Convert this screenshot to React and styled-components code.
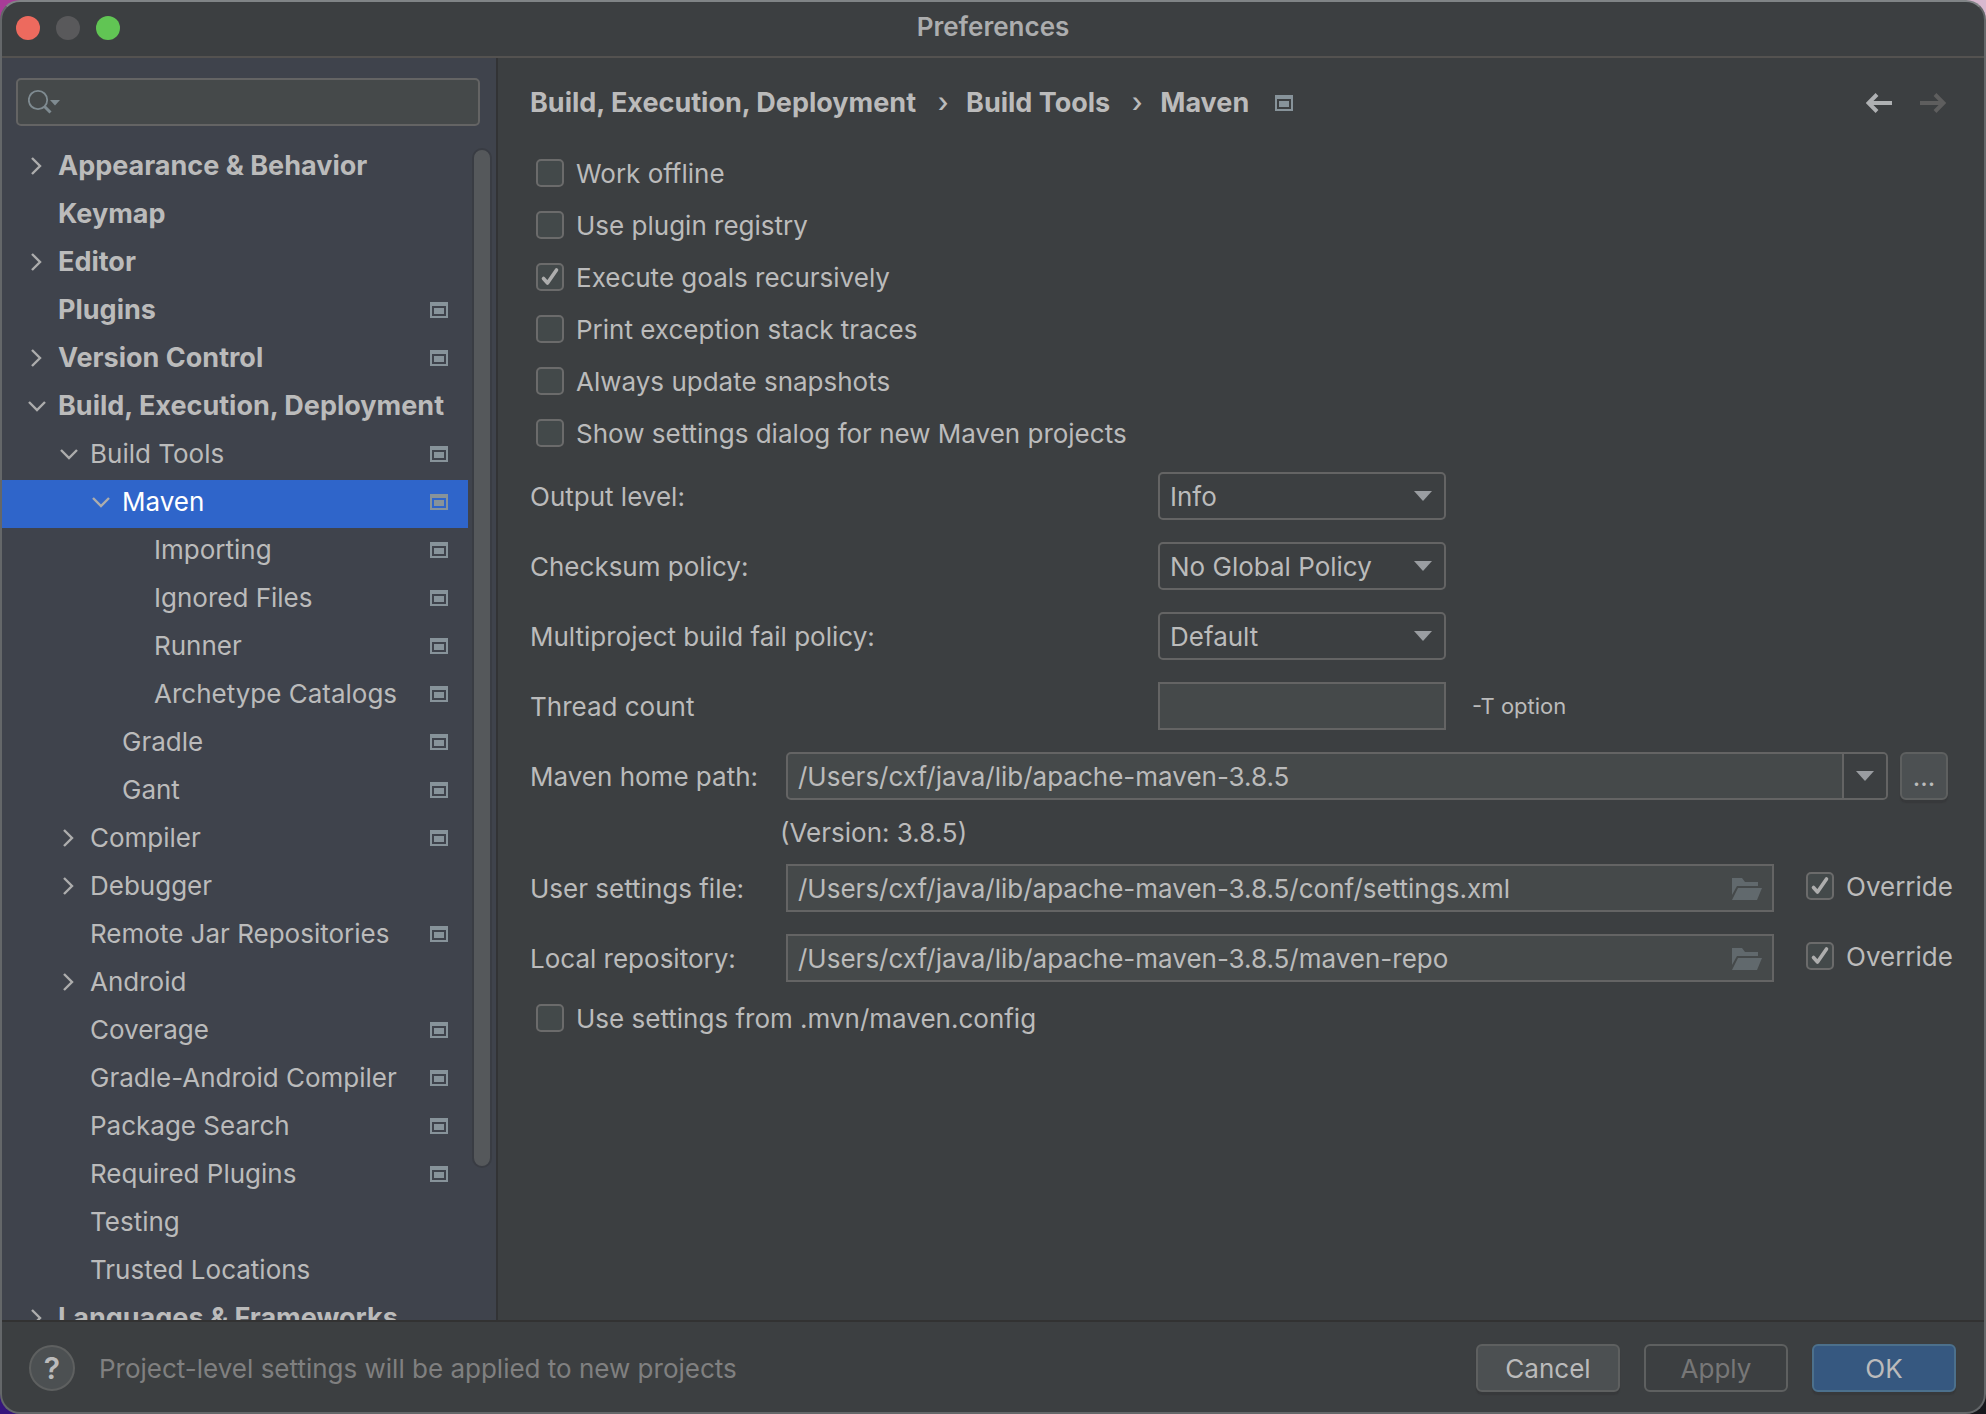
import React from "react";
import styled, { createGlobalStyle } from "styled-components";

const GlobalStyle = createGlobalStyle`
  * {
    box-sizing: border-box;
  }

  body {
    margin: 0;
    background: linear-gradient(to right, #a83c97 0, #a83c97 50%, #d8b8cf 50%) top / 100% 50% no-repeat,
      linear-gradient(to right, #35157c 0, #35157c 50%, #17171c 50%) bottom / 100% 50% no-repeat;
  }

  body, button, input, select {
    font-family: Inter, "Liberation Sans", sans-serif;
    font-size: 26px;
    line-height: 32px;
    color: #bbbbbb;
  }
`;

const tree = [
  { label: "Appearance & Behavior", level: 0, arrow: "right" },
  { label: "Keymap", level: 0 },
  { label: "Editor", level: 0, arrow: "right" },
  { label: "Plugins", level: 0, project: true },
  { label: "Version Control", level: 0, arrow: "right", project: true },
  { label: "Build, Execution, Deployment", level: 0, arrow: "down" },
  { label: "Build Tools", level: 1, arrow: "down", project: true },
  { label: "Maven", level: 2, arrow: "down", project: true, selected: true },
  { label: "Importing", level: 3, project: true },
  { label: "Ignored Files", level: 3, project: true },
  { label: "Runner", level: 3, project: true },
  { label: "Archetype Catalogs", level: 3, project: true },
  { label: "Gradle", level: 2, project: true },
  { label: "Gant", level: 2, project: true },
  { label: "Compiler", level: 1, arrow: "right", project: true },
  { label: "Debugger", level: 1, arrow: "right" },
  { label: "Remote Jar Repositories", level: 1, project: true },
  { label: "Android", level: 1, arrow: "right" },
  { label: "Coverage", level: 1, project: true },
  { label: "Gradle-Android Compiler", level: 1, project: true },
  { label: "Package Search", level: 1, project: true },
  { label: "Required Plugins", level: 1, project: true },
  { label: "Testing", level: 1 },
  { label: "Trusted Locations", level: 1 },
  { label: "Languages & Frameworks", level: 0, arrow: "right" },
];

const options = [
  { label: "Work offline" },
  { label: "Use plugin registry" },
  { label: "Execute goals recursively", checked: true },
  { label: "Print exception stack traces" },
  { label: "Always update snapshots" },
  { label: "Show settings dialog for new Maven projects" },
];

const selects = [
  { id: "output", label: "Output level:", values: ["Info", "Debug", "Warn", "Error", "Fatal", "Disabled"] },
  { id: "checksum", label: "Checksum policy:", values: ["No Global Policy", "Fail", "Warn"] },
  { id: "multiproject", label: "Multiproject build fail policy:", values: ["Default", "Fail Fast", "Fail at End", "Never Fail"] },
];

const paths = [
  { id: "settings", label: "User settings file:", value: "/Users/cxf/java/lib/apache-maven-3.8.5/conf/settings.xml" },
  { id: "repository", label: "Local repository:", value: "/Users/cxf/java/lib/apache-maven-3.8.5/maven-repo" },
];

const ProjectIcon = () => (
  <svg width="18" height="16" viewBox="0 0 18 16" fill="#87939a" aria-hidden="true">
    <path fillRule="evenodd" d="M0 0h18v16H0zM2 4v10h14V4z" />
    <path d="M4 6h10v6H4z" />
  </svg>
);

const Chevron = ({ dir }) => (
  <svg width="18" height="18" viewBox="0 0 18 18" fill="none" stroke="#adadad" strokeWidth="2.4" aria-hidden="true">
    <path d={dir === "down" ? "M1 5l8 8 8-8" : "M4 1l8 8-8 8"} />
  </svg>
);

const Triangle = () => (
  <svg width="18" height="10" viewBox="0 0 18 10" fill="#9a9da1" aria-hidden="true">
    <path d="M0 0h18L9 10z" />
  </svg>
);

const SearchIcon = () => (
  <svg width="34" height="26" viewBox="0 0 34 26" fill="none" stroke="#7f8b91" aria-hidden="true">
    <circle cx="10" cy="11" r="9.2" strokeWidth="1.8" />
    <path d="M16.500 17.500l6 6" strokeWidth="3" />
    <path d="M22 11h10l-5 5.500z" fill="#7f8b91" stroke="none" />
  </svg>
);

const FolderIcon = () => (
  <svg width="30" height="22" viewBox="0 0 30 22" fill="#61696d" aria-hidden="true">
    <path d="M0 0h10l3 4h13v4H5L0 17z" />
    <path d="M6 10h24l-5 12H0z" />
  </svg>
);

const Arrow = ({ back }) => (
  <svg width="26" height="20" viewBox="0 0 26 20" fill="none" stroke={back ? "#afb1b3" : "#5e5e5e"} strokeWidth="4" aria-hidden="true">
    <path d={back ? "M26 10H4M11 1.500L2.500 10l8.500 8.500" : "M0 10h22M15 1.500L23.500 10 15 18.500"} />
  </svg>
);

const Check = ({ label, checked }) => (
  <CheckLabel>
    <CheckBox>
      <input type="checkbox" defaultChecked={checked} />
      <svg width="28" height="28" viewBox="0 0 28 28" fill="none" stroke="#adadad" strokeWidth="3.600" strokeLinecap="round" strokeLinejoin="round" aria-hidden="true">
        <path d="M7.500 15.500l4 4.500 9-13" />
      </svg>
    </CheckBox>
    <CheckText>{label}</CheckText>
  </CheckLabel>
);

const App = () => {
  return (
    <Window>
      <GlobalStyle />
      <TitleBar>
        <Lights>
          <Light $color="#ed6a5e" aria-label="Close" />
          <Light $color="#59595b" aria-label="Minimize" />
          <Light $color="#61c554" aria-label="Zoom" />
        </Lights>
        <h1>Preferences</h1>
      </TitleBar>

      <Body>
        <Sidebar>
          <Search>
            <SearchIcon />
            <input type="text" aria-label="Search settings" />
          </Search>
          <TreeArea>
            <Tree>
              {tree.map((item) => (
                <li key={item.label}>
                  <TreeRow $level={item.level} $selected={item.selected}>
                    <ArrowSlot>{item.arrow && <Chevron dir={item.arrow} />}</ArrowSlot>
                    <span>{item.label}</span>
                    {item.project && <ProjectIcon />}
                  </TreeRow>
                </li>
              ))}
            </Tree>
            <ScrollTrack>
              <ScrollThumb />
            </ScrollTrack>
          </TreeArea>
        </Sidebar>

        <Main>
          <Header>
            <Breadcrumb aria-label="Breadcrumb">
              <a href="#build">Build, Execution, Deployment</a>
              <Separator>›</Separator>
              <a href="#tools">Build Tools</a>
              <Separator>›</Separator>
              <a href="#maven">Maven</a>
            </Breadcrumb>
            <ProjectIcon />
            <History>
              <button type="button" aria-label="Back"><Arrow back /></button>
              <button type="button" aria-label="Forward" disabled><Arrow /></button>
            </History>
          </Header>

          <Checks>
            {options.map((option) => (
              <Check key={option.label} {...option} />
            ))}
          </Checks>

          <Policies>
            {selects.map((select) => (
              <React.Fragment key={select.id}>
                <FieldLabel htmlFor={select.id}>{select.label}</FieldLabel>
                <SelectBox>
                  <select id={select.id}>
                    {select.values.map((value) => (
                      <option key={value}>{value}</option>
                    ))}
                  </select>
                  <Triangle />
                </SelectBox>
                <span />
              </React.Fragment>
            ))}
            <FieldLabel htmlFor="threads">Thread count</FieldLabel>
            <Field><input id="threads" type="text" /></Field>
            <Hint>-T option</Hint>
          </Policies>

          <PathRow>
            <FieldLabel htmlFor="home">Maven home path:</FieldLabel>
            <Field $round>
              <input id="home" type="text" defaultValue="/Users/cxf/java/lib/apache-maven-3.8.5" />
              <DropButton type="button" aria-label="Show paths"><Triangle /></DropButton>
            </Field>
            <BrowseButton type="button" aria-label="Browse">...</BrowseButton>
          </PathRow>
          <Version>(Version: 3.8.5)</Version>
          <Paths>
            {paths.map((path) => (
              <OverrideRow key={path.id}>
                <FieldLabel htmlFor={path.id}>{path.label}</FieldLabel>
                <Field>
                  <input id={path.id} type="text" defaultValue={path.value} />
                  <FolderButton type="button" aria-label="Choose file"><FolderIcon /></FolderButton>
                </Field>
                <Check label="Override" checked />
              </OverrideRow>
            ))}
            <Indent>
              <Check label="Use settings from .mvn/maven.config" />
            </Indent>
          </Paths>
        </Main>
      </Body>

      <Footer>
        <Help type="button" aria-label="Help">?</Help>
        <p>Project-level settings will be applied to new projects</p>
        <Button type="button">Cancel</Button>
        <Button type="button" disabled>Apply</Button>
        <Button type="button" $primary>OK</Button>
      </Footer>
    </Window>
  );
};

const Window = styled.div`
  display: flex;
  flex-direction: column;
  height: 100vh;
  overflow: hidden;
  background: #3c3f41;
  border: 2px solid #646769;
  border-top-color: #808486;
  border-radius: 20px;
`;

const TitleBar = styled.header`
  display: grid;
  grid-template-columns: 1fr auto 1fr;
  align-items: center;
  height: 56px;
  flex-shrink: 0;
  padding: 0 14px 2px;
  border-bottom: 2px solid #545250;

  h1 {
    margin: 0 0 2px;
    font-size: 26px;
    line-height: 32px;
    font-weight: 600;
    color: #acadae;
  }
`;

const Lights = styled.div`
  display: flex;
  gap: 16px;
`;

const Light = styled.button`
  width: 24px;
  height: 24px;
  padding: 0;
  border: none;
  border-radius: 50%;
  background: ${({ $color }) => $color};
`;

const Body = styled.div`
  display: flex;
  flex: 1;
  min-height: 0;
`;

const Sidebar = styled.aside`
  display: flex;
  flex-direction: column;
  width: 496px;
  flex-shrink: 0;
  padding-top: 20px;
  background: #3f434c;
  border-right: 2px solid #323335;
`;

const Search = styled.div`
  display: flex;
  align-items: center;
  height: 48px;
  flex-shrink: 0;
  margin: 0 16px 18px 14px;
  padding-left: 10px;
  background: #45494a;
  border: 2px solid #646464;
  border-radius: 5px;

  input {
    flex: 1;
    min-width: 0;
    border: none;
    outline: none;
    background: none;
  }
`;

const TreeArea = styled.div`
  display: flex;
  flex: 1;
  min-height: 0;
  gap: 4px;
`;

const Tree = styled.ul`
  flex: 1;
  min-width: 0;
  margin: 0;
  padding: 0;
  list-style: none;
  overflow: hidden;
`;

const TreeRow = styled.button`
  display: flex;
  align-items: center;
  width: 100%;
  height: 48px;
  border: none;
  padding: 0 20px 4px ${({ $level }) => 26 + $level * 32}px;
  text-align: left;
  white-space: nowrap;
  font-size: ${({ $level }) => ($level === 0 ? 27 : 26)}px;
  font-weight: ${({ $level }) => ($level === 0 ? 700 : 400)};
  color: ${({ $selected }) => ($selected ? "#ffffff" : "#bbbbbb")};
  background: ${({ $selected }) => ($selected ? "#2f65ca" : "none")};

  span {
    flex: 1;
  }
`;

const ArrowSlot = styled.i`
  display: flex;
  width: 30px;
`;

const ScrollTrack = styled.div`
  width: 20px;
  margin-right: 4px;
  padding-top: 4px;
`;

const ScrollThumb = styled.div`
  height: 87%;
  background: #55585b;
  border: 2px solid #393c43;
  border-radius: 10px;
`;

const Main = styled.main`
  flex: 1;
  min-width: 0;
  padding: 0 30px 0 32px;
`;

const Header = styled.div`
  display: flex;
  align-items: center;
  height: 90px;
`;

const Breadcrumb = styled.nav`
  display: flex;
  align-items: center;
  margin-right: 26px;
  font-size: 27px;
  font-weight: 700;

  a {
    color: inherit;
    text-decoration: none;
  }
`;

const Separator = styled.span`
  width: 50px;
  padding-left: 4px;
  text-align: center;
  font-weight: 500;
`;

const History = styled.div`
  display: flex;
  gap: 28px;
  margin-left: auto;
  margin-right: 8px;

  button {
    display: flex;
    padding: 0;
    border: none;
    background: none;
  }
`;

const Checks = styled.div`
  display: flex;
  flex-direction: column;
  align-items: flex-start;
  gap: 24px;
  padding: 11px 6px 25px;
`;

const CheckLabel = styled.label`
  display: flex;
  align-items: center;
  gap: 12px;
  height: 28px;
  white-space: nowrap;
`;

const CheckText = styled.span`
  padding-top: 2px;
`;

const CheckBox = styled.span`
  display: grid;

  input, svg {
    grid-area: 1 / 1;
  }

  input {
    appearance: none;
    width: 28px;
    height: 28px;
    margin: 0;
    background: #43494a;
    border: 2px solid #6b6b6b;
    border-radius: 5px;
  }

  svg {
    visibility: hidden;
    pointer-events: none;
  }

  input:checked + svg {
    visibility: visible;
  }
`;

const Policies = styled.div`
  display: grid;
  grid-template-columns: 628px 288px 1fr;
  grid-auto-rows: 48px;
  align-items: center;
  row-gap: 22px;
  margin-bottom: 22px;
`;

const FieldLabel = styled.label`
  width: 256px;
  padding-top: 2px;
  white-space: nowrap;
`;

const SelectBox = styled.div`
  display: grid;
  align-items: center;

  select, svg {
    grid-area: 1 / 1;
  }

  select {
    appearance: none;
    width: 100%;
    height: 48px;
    padding: 2px 40px 0 10px;
    background: #3c3f41;
    border: 2px solid #646464;
    border-radius: 5px;
  }

  svg {
    justify-self: end;
    margin-right: 14px;
    pointer-events: none;
  }
`;

const Field = styled.div`
  display: flex;
  flex: 1;
  min-width: 0;
  height: 48px;
  background: #45494a;
  border: 2px solid #646464;
  border-radius: ${({ $round }) => ($round ? "5px" : "0")};

  input {
    flex: 1;
    min-width: 0;
    padding: 2px 10px 0;
    border: none;
    outline: none;
    background: none;
  }
`;

const Hint = styled.span`
  padding-left: 26px;
  font-size: 22px;
`;

const PathRow = styled.div`
  display: flex;
  align-items: center;
  padding-right: 6px;
`;

const DropButton = styled.button`
  display: flex;
  align-items: center;
  justify-content: center;
  width: 44px;
  padding: 0;
  border: none;
  border-left: 2px solid #646464;
  border-radius: 0 3px 3px 0;
  background: #3c3f41;
`;

const FolderButton = styled.button`
  display: flex;
  align-items: center;
  padding: 2px 10px 0;
  border: none;
  background: none;
`;

const Button = styled.button`
  width: 144px;
  height: 48px;
  padding: 2px 0 0;
  background: ${({ $primary }) => ($primary ? "#365880" : "#4c5052")};
  border: 2px solid ${({ $primary }) => ($primary ? "#4c708c" : "#5e6060")};
  border-radius: 6px;
  box-shadow: 0 3px 1px #37393b;

  &:disabled {
    color: #777777;
    background: none;
    box-shadow: none;
  }
`;

const BrowseButton = styled(Button)`
  width: 48px;
  margin-left: 12px;
`;

const Version = styled.p`
  margin: 0;
  padding: 17px 0 15px 250px;
`;

const Paths = styled.div`
  display: flex;
  flex-direction: column;
  gap: 22px;
`;

const OverrideRow = styled.div`
  display: grid;
  grid-template-columns: 256px 1fr 180px;
  align-items: center;

  ${CheckLabel} {
    margin-left: 32px;
    margin-bottom: 4px;
  }
`;

const Indent = styled.div`
  padding-left: 6px;
`;

const Footer = styled.footer`
  display: flex;
  align-items: center;
  gap: 24px;
  height: 92px;
  flex-shrink: 0;
  padding: 2px 28px 0 27px;
  border-top: 2px solid #323232;

  p {
    flex: 1;
    margin: 0;
    padding-top: 2px;
    color: #808080;
  }
`;

const Help = styled.button`
  width: 46px;
  height: 46px;
  padding: 0;
  background: #4c5052;
  border: 2px solid #5e6060;
  border-radius: 50%;
  font-size: 30px;
  font-weight: 600;
`;

export default App;
